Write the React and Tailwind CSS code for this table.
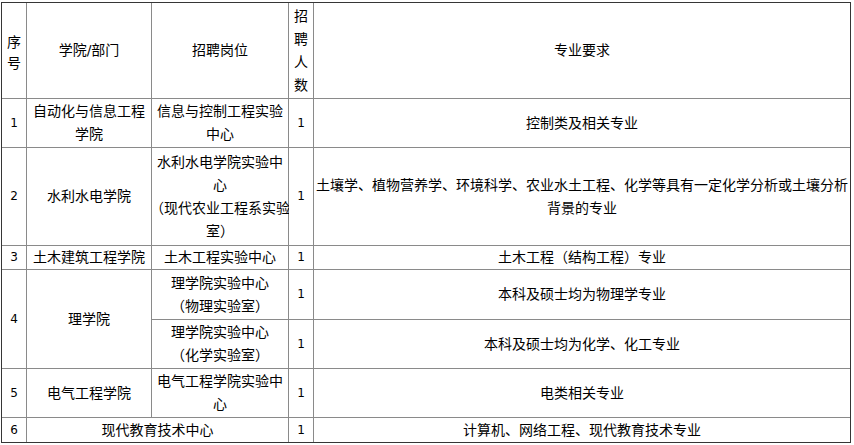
import React from 'react';

const FONT = "font-['DejaVu_Sans','Noto_Sans_CJK_SC',sans-serif]";

const Cell = ({ className = '', lines }) => (
  <div className={`bg-white flex flex-col items-center justify-center text-center px-[2px] ${className}`}>
    {lines.map((l, i) => (
      <span key={i} className="block whitespace-nowrap">{l}</span>
    ))}
  </div>
);

const rows = [
  { n: '1', dept: ['自动化与信息工程', '学院'], post: ['信息与控制工程实验', '中心'], req: ['控制类及相关专业'] },
  {
    n: '2',
    dept: ['水利水电学院'],
    post: ['水利水电学院实验中', '心', '（现代农业工程系实验', '室）'],
    req: ['土壤学、植物营养学、环境科学、农业水土工程、化学等具有一定化学分析或土壤分析', '背景的专业'],
  },
  { n: '3', dept: ['土木建筑工程学院'], post: ['土木工程实验中心'], req: ['土木工程（结构工程）专业'] },
];

export default function App() {
  return (
    <div className={`bg-white w-[854px] h-[445px] pt-[2px] pl-px text-[14px] leading-[23px] text-black ${FONT}`}>
      <div className="grid w-[850px] grid-cols-[24px_124px_136px_24px_536px] grid-rows-[95px_48px_97px_23px_49px_48px_48px_24px] gap-px bg-[#8a8a8a] border border-[#363636]">
        {/* header */}
        <Cell className="col-start-1 row-start-1 leading-[21px] pt-[4px]" lines={['序', '号']} />
        <Cell className="col-start-2 row-start-1" lines={['学院/部门']} />
        <Cell className="col-start-3 row-start-1" lines={['招聘岗位']} />
        <Cell className="col-start-4 row-start-1" lines={['招', '聘', '人', '数']} />
        <Cell className="col-start-5 row-start-1" lines={['专业要求']} />

        {rows.map((r) => (
          <React.Fragment key={r.n}>
            <Cell className="col-start-1 text-[12px]" lines={[r.n]} />
            <Cell className="col-start-2" lines={r.dept} />
            <Cell className="col-start-3" lines={r.post} />
            <Cell className="col-start-4 text-[12px]" lines={['1']} />
            <Cell className="col-start-5" lines={r.req} />
          </React.Fragment>
        ))}

        {/* 理学院: two posts */}
        <Cell className="col-start-1 row-start-5 row-span-2 text-[12px]" lines={['4']} />
        <Cell className="col-start-2 row-start-5 row-span-2" lines={['理学院']} />
        <Cell className="col-start-3 row-start-5" lines={['理学院实验中心', '（物理实验室）']} />
        <Cell className="col-start-4 row-start-5 text-[12px]" lines={['1']} />
        <Cell className="col-start-5 row-start-5" lines={['本科及硕士均为物理学专业']} />
        <Cell className="col-start-3 row-start-6" lines={['理学院实验中心', '（化学实验室）']} />
        <Cell className="col-start-4 row-start-6 text-[12px]" lines={['1']} />
        <Cell className="col-start-5 row-start-6" lines={['本科及硕士均为化学、化工专业']} />

        <Cell className="col-start-1 row-start-7 text-[12px]" lines={['5']} />
        <Cell className="col-start-2 row-start-7" lines={['电气工程学院']} />
        <Cell className="col-start-3 row-start-7" lines={['电气工程学院实验中', '心']} />
        <Cell className="col-start-4 row-start-7 text-[12px]" lines={['1']} />
        <Cell className="col-start-5 row-start-7" lines={['电类相关专业']} />

        <Cell className="col-start-1 row-start-8 text-[12px]" lines={['6']} />
        <Cell className="col-start-2 col-span-2 row-start-8" lines={['现代教育技术中心']} />
        <Cell className="col-start-4 row-start-8 text-[12px]" lines={['1']} />
        <Cell className="col-start-5 row-start-8" lines={['计算机、网络工程、现代教育技术专业']} />
      </div>
    </div>
  );
}
